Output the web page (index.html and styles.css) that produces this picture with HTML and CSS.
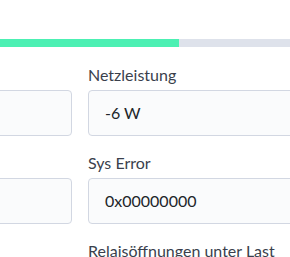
FILE: index.html
```html
<!DOCTYPE html>
<html lang="de">
<head>
  <meta charset="UTF-8">
  <title>Status</title>
  <link rel="stylesheet" href="styles.css">
</head>
<body>

<div class="panel">
  <!-- Ladezustand -->
  <div class="progress">
    <div class="progress-fill" style="width: 71.7%;"></div>
  </div>

  <!-- left column is cut off by the frame, so it stays empty -->
  <div class="fields">
    <div class="field">
      <label></label>
      <div class="value"></div>
    </div>
    <div class="field">
      <label>Netzleistung</label>
      <div class="value">-6 W</div>
    </div>

    <div class="field">
      <label></label>
      <div class="value"></div>
    </div>
    <div class="field">
      <label>Sys Error</label>
      <div class="value">0x00000000</div>
    </div>

    <div class="field">
      <label></label>
    </div>
    <div class="field">
      <label>Relaisöffnungen unter Last</label>
    </div>
  </div>
</div>

</body>
</html>
```
FILE: styles.css
```css
body {
  margin: 0;
  font-family: 'Lato', 'Segoe UI', sans-serif;
  background: #ffffff;
  color: #3a3f4c;
  overflow: hidden;
}

.panel {
  width: 456px;
  margin-left: -148px;
  padding-top: 39px;
}

.progress {
  height: 8px;
  background: #dee2eb;
}

.progress-fill {
  height: 100%;
  background: #4cf0b3;
}

.fields {
  display: grid;
  grid-template-columns: 220px 220px;
  column-gap: 16px;
  row-gap: 15px;
  margin-top: 16px;
}

.field label {
  display: block;
  height: 24px;
  font-size: 16px;
  line-height: 24px;
  margin-bottom: 3px;
}

.field .value {
  height: 24px;
  padding: 10px 16px;
  border: 1px solid #d2d7e2;
  border-radius: 4px;
  background: #fafbfc;
  color: #212529;
  font-size: 16px;
  line-height: 24px;
}
```
